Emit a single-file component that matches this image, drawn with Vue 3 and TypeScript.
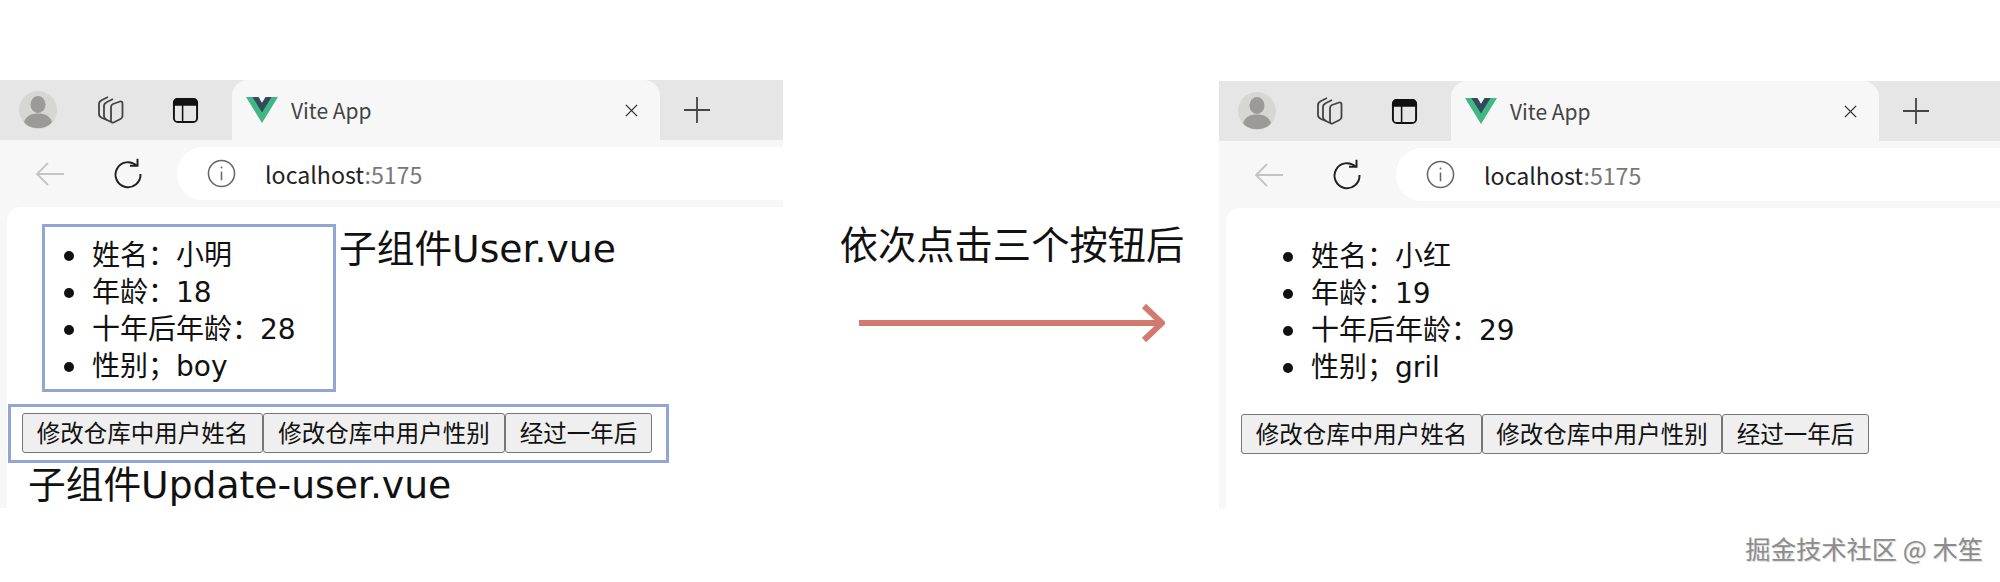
<script setup lang="ts">
interface Panel {
  marked: boolean
  name: string
  age: number
  gender: string
}

// Both windows show the same page, only the store values differ
const panels: Panel[] = [
  { marked: true, name: '小明', age: 18, gender: 'boy' },
  { marked: false, name: '小红', age: 19, gender: 'gril' },
]

const buttons = ['修改仓库中用户姓名', '修改仓库中用户性别', '经过一年后']
</script>

<template>
  <div class="page">
    <template v-for="(panel, index) in panels" :key="index">
      <section class="browser" :class="{ second: index === 1 }">
        <div class="tabstrip">
          <svg class="avatar" viewBox="0 0 38 38">
            <circle cx="19" cy="19" r="19" fill="#d6d6d4" />
            <ellipse cx="19" cy="13.5" rx="7.5" ry="8.5" fill="#9b9a96" />
            <path d="M5 31c2-6 7-8.500 14-8.500S31 25 33 31c-3 4-8 6-14 6S8 35 5 31z" fill="#9b9a96" />
          </svg>
          <svg class="tool-icon collections" viewBox="0 0 32 32" fill="none" stroke="#444" stroke-width="1.800" stroke-linejoin="round">
            <path d="M13 26 8 24c-2-1-3-2-3-4V10c0-2 1-3 3-4l6-3" />
            <path d="M17 28 13 26c-2-1-3-2-3-4V12c0-2 1-3 3-4l6-3" />
            <path d="M17 13c0-1.500.800-2.400 2-3l7-2.500c1.500-.400 2.500.400 2.500 2V22c0 1.500-.600 2.400-2 3l-7 3.500c-1.500.500-2.500-.300-2.500-2z" />
          </svg>
          <svg class="tool-icon vertical" viewBox="0 0 28 28" fill="none" stroke="#111" stroke-width="2">
            <rect x="2" y="2" width="24" height="24" rx="4" />
            <path d="M2 8V6a4 4 0 0 1 4-4h16a4 4 0 0 1 4 4v2z" fill="#111" />
            <path d="M11 8v18" stroke-width="1.600" />
          </svg>
          <div class="tab">
            <svg class="favicon" viewBox="0 0 261.760 226.690" preserveAspectRatio="none">
              <path d="M161.096.001l-30.225 52.351L100.647.001H-.005l130.877 226.688L261.749.001z" fill="#41b883" />
              <path d="M161.096.001l-30.225 52.351L100.647.001H52.346l78.526 136.010L209.398.001z" fill="#34495e" />
            </svg>
            <span class="tab-title">Vite App</span>
            <svg class="tab-close" viewBox="0 0 16 16" stroke="#333" stroke-width="1.500">
              <path d="M2 2l12 12M14 2 2 14" />
            </svg>
          </div>
          <svg class="tab-plus" viewBox="0 0 26 26" stroke="#444" stroke-width="1.800">
            <path d="M13 0v26M0 13h26" />
          </svg>
        </div>

        <div class="navbar">
          <svg class="back" viewBox="0 0 30 26" fill="none" stroke="#c4c4c4" stroke-width="1.800">
            <path d="M29 13H2M13 2 2 13l11 11" />
          </svg>
          <svg class="reload" viewBox="0 0 32 32" fill="none" stroke="#222" stroke-width="2">
            <path d="M24.500 7.500A12.500 12.500 0 1 0 28.500 16" />
            <path d="M18 7.800h7.500V.800" />
          </svg>
          <div class="address">
            <svg class="info" viewBox="0 0 30 30" fill="none" stroke="#666" stroke-width="1.600">
              <circle cx="15" cy="15" r="13.500" />
              <path d="M15 13v9" />
              <circle cx="15" cy="8.800" r="1" fill="#666" stroke="none" />
            </svg>
            <span class="host">localhost<span class="port">:5175</span></span>
          </div>
        </div>

        <div class="content-wrap">
          <div class="content">
            <div class="user-row">
              <ul class="user" :class="{ marked: panel.marked }">
                <li>姓名：{{ panel.name }}</li>
                <li>年龄：{{ panel.age }}</li>
                <li>十年后年龄：{{ panel.age + 10 }}</li>
                <li>性别；{{ panel.gender }}</li>
              </ul>
              <span v-if="panel.marked" class="label">子组件User.vue</span>
            </div>
            <div class="actions" :class="{ marked: panel.marked }">
              <button v-for="text in buttons" :key="text">{{ text }}</button>
            </div>
            <div v-if="panel.marked" class="label label-update">子组件Update-user.vue</div>
          </div>
        </div>
      </section>

      <div v-if="index === 0" class="middle">
        <div class="step">依次点击三个按钮后</div>
        <svg class="arrow" viewBox="0 0 306 40" fill="none" stroke="#d27a72" stroke-width="6">
          <path d="M0 20h302" />
          <path d="M285 3l18 17-18 17" />
        </svg>
      </div>
    </template>
    <div class="watermark">掘金技术社区 @ 木笙</div>
  </div>
</template>

<style>
body {
  background: #fff;
}
</style>

<style scoped>
.page {
  position: relative;
  display: flex;
  align-items: flex-start;
  width: 2000px;
  height: 582px;
  padding-top: 80px;
  box-sizing: border-box;
  overflow: hidden;
  font-family: "Noto Sans CJK SC", "Noto Sans", sans-serif;
  color: #111;
}

.browser {
  width: 783px;
  flex: none;
}

.browser.second {
  width: 781px;
  margin-top: 1px;
}

.tabstrip {
  display: flex;
  align-items: center;
  height: 60px;
  background: #e6e6e6;
}

.avatar {
  width: 38px;
  height: 38px;
  margin-left: 19px;
}

.tool-icon.collections {
  width: 32px;
  height: 32px;
  margin-left: 37px;
}

.tool-icon.vertical {
  width: 27px;
  height: 27px;
  margin-left: 46px;
}

.tab {
  display: flex;
  align-items: center;
  width: 428px;
  height: 60px;
  margin-left: 33px;
  background: #f7f7f7;
  border-radius: 16px 16px 0 0;
}

.favicon {
  width: 32px;
  height: 26px;
  margin-left: 14px;
}

.tab-title {
  margin-left: 13px;
  font-size: 21px;
  color: #444;
}

.tab-close {
  width: 15px;
  height: 15px;
  margin-left: auto;
  margin-right: 21px;
}

.tab-plus {
  width: 26px;
  height: 26px;
  margin-left: 24px;
}

.navbar {
  display: flex;
  align-items: center;
  height: 67px;
  background: #f7f7f7;
}

.back {
  width: 30px;
  height: 26px;
  margin-left: 35px;
}

.reload {
  width: 32px;
  height: 32px;
  margin-left: 47px;
}

.address {
  display: flex;
  align-items: center;
  flex: 1;
  height: 53px;
  margin-left: 33px;
  background: #fff;
  border-radius: 26px 0 0 26px;
}

.info {
  width: 29px;
  height: 29px;
  margin-left: 30px;
}

.host {
  margin-left: 29px;
  font-size: 23.200px;
  color: #222;
}

.port {
  color: #777;
}

.content-wrap {
  background: #f7f7f7;
  padding-left: 7px;
}

.content {
  height: 301px;
  padding-top: 17px;
  box-sizing: border-box;
  background: #fff;
  border-radius: 14px 0 0 0;
}

.user-row {
  display: flex;
  align-items: flex-start;
}

.user {
  width: 294px;
  height: 168px;
  margin: 0 0 0 35px;
  padding: 10px 0 0 47px;
  box-sizing: border-box;
  border: 3px solid transparent;
  list-style: none;
  font-family: "DejaVu Sans", "Noto Sans CJK SC", sans-serif;
  font-size: 28px;
  line-height: 37px;
}

.user li {
  position: relative;
}

/* the DejaVu disc is too small, so the bullet is drawn */
.user li::before {
  content: "";
  position: absolute;
  left: -28px;
  top: 14px;
  width: 10px;
  height: 10px;
  border-radius: 50%;
  background: #111;
}

.marked {
  border-color: #92a6d4;
}

.label {
  font-family: "DejaVu Sans", "Noto Sans CJK SC", sans-serif;
  font-size: 37.700px;
  line-height: 50px;
  white-space: nowrap;
}

.user-row .label {
  margin: 0 0 0 3px;
}

.label-update {
  margin: -3px 0 0 21px;
}

.actions {
  display: grid;
  grid-template-columns: 241px 242px 147px;
  width: 661px;
  height: 59px;
  margin: 12px 0 0 1px;
  padding: 6px 0 0 11px;
  box-sizing: border-box;
  border: 3px solid transparent;
}

.second .actions {
  grid-template-columns: 241px 240px 147px;
}

.actions.marked {
  border-color: #92a6d4;
}

.actions button {
  height: 40px;
  padding: 0;
  font-family: inherit;
  font-size: 23.500px;
  line-height: 1;
  color: #111;
  white-space: nowrap;
  background: #efefef;
  border: 1px solid #767676;
  border-radius: 3px;
}

.middle {
  display: flex;
  flex-direction: column;
  align-items: center;
  flex: none;
  width: 436px;
  padding: 136px 0 0 22px;
  box-sizing: border-box;
}

.step {
  font-size: 38.300px;
  line-height: 54px;
  white-space: nowrap;
}

.arrow {
  width: 306px;
  height: 40px;
  margin-top: 33px;
}

.watermark {
  position: absolute;
  right: 17px;
  bottom: 17px;
  font-size: 25.300px;
  line-height: 34px;
  color: #8c8c8c;
  text-shadow: 1px 1px 1px #d8d8d8;
  white-space: nowrap;
}
</style>
